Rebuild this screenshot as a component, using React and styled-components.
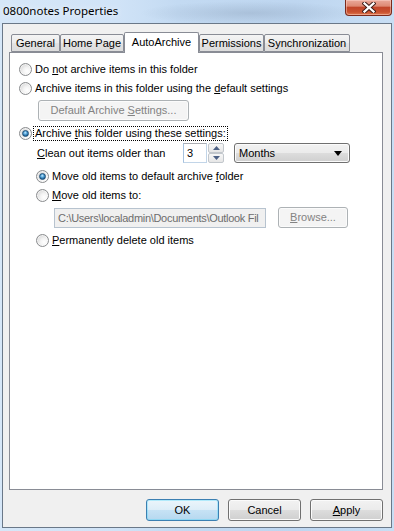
import React from 'react';
import styled, { createGlobalStyle } from 'styled-components';

const Global = createGlobalStyle`
  html, body { margin: 0; padding: 0; width: 394px; height: 531px; overflow: hidden; background: #c4dcf3; }
  #root { width: 394px; height: 531px; }
  * { box-sizing: border-box; }
`;

const Window = styled.div`
  width: 394px;
  height: 531px;
  display: flex;
  flex-direction: column;
  padding: 0 2px 3px 2px;
  background:
    radial-gradient(ellipse 110px 12px at 250px 13px, rgba(120,140,165,0.3), rgba(120,140,165,0) 100%),
    linear-gradient(90deg, #d6e7f8 0%, #d0e3f7 30%, #c3daf2 45%, #bed6f0 75%, #c8def4 100%);
  font-family: "Liberation Sans", Arial, sans-serif;
  font-size: 11px;
  color: #000;
`;

const TitleBar = styled.div`
  height: 23px;
  display: flex;
  justify-content: space-between;
  align-items: flex-start;
`;

const TitleText = styled.div`
  font-family: "Noto Sans", "Liberation Sans", sans-serif;
  font-size: 11.5px;
  line-height: 16px;
  padding: 3px 0 0 1px;
  color: #000;
  text-shadow: 0 0 6px rgba(255,255,255,0.9);
`;

const CloseBtn = styled.div`
  width: 47px;
  height: 16px;
  border: 1px solid #7b2a1c;
  border-top: none;
  border-radius: 0 0 4px 4px;
  background: linear-gradient(#eaa99a 0%, #de8a74 40%, #c2462a 50%, #c9512f 80%, #e07a50 100%);
  box-shadow: inset 0 0 0 1px rgba(255,220,210,0.45);
  display: flex;
  align-items: center;
  justify-content: center;
`;

const Client = styled.div`
  flex: 1;
  display: flex;
  flex-direction: column;
  border: 1px solid #6a7888;
  background: #f0f0f0;
  padding: 8px 8px 6px 6px;
`;

const TabStrip = styled.div`
  height: 20px;
  display: flex;
  align-items: flex-end;
  padding-left: 2px;
`;

const Tab = styled.div`
  width: ${p => p.$w}px;
  height: ${p => (p.$active ? 21 : 18)}px;
  margin-bottom: ${p => (p.$active ? -1 : 0)}px;
  position: relative;
  z-index: ${p => (p.$active ? 2 : 1)};
  border: 1px solid #898c95;
  border-bottom: ${p => (p.$active ? 'none' : '1px solid #898c95')};
  border-radius: 2px 2px 0 0;
  background: ${p => (p.$active ? '#ffffff' : 'linear-gradient(#f4f4f4 0%, #ececec 50%, #e3e3e3 51%, #dcdcdc 100%)')};
  display: flex;
  justify-content: center;
  align-items: ${p => (p.$active ? 'flex-start' : 'center')};
  padding-top: ${p => (p.$active ? 3 : 0)}px;
  line-height: 13px;
  white-space: nowrap;
`;

const Panel = styled.div`
  flex: 1;
  border: 1px solid #898c95;
  background: #fff;
  padding: 9px 0 0 9px;
  display: flex;
  flex-direction: column;
`;

const Row = styled.div`
  display: flex;
  align-items: center;
  height: ${p => p.$h || 15}px;
  margin-top: ${p => p.$mt || 0}px;
  margin-left: ${p => p.$ml || 0}px;
  white-space: nowrap;
`;

const RadioOuter = styled.span`
  width: 13px;
  height: 13px;
  flex: none;
  border-radius: 50%;
  border: 1px solid #8a8c8e;
  background: radial-gradient(circle at 65% 65%, #ffffff 0%, #f4f4f4 35%, #d6d6d6 80%, #cacaca 100%);
  box-shadow: inset 0 0 0 1px rgba(255,255,255,0.6);
  display: flex;
  align-items: center;
  justify-content: center;
  margin-right: 3px;
`;

const RadioDot = styled.span`
  width: 7px;
  height: 7px;
  border-radius: 50%;
  background: radial-gradient(circle at 45% 35%, #c9ecff 0%, #5aa8dc 35%, #1b5f94 75%, #0d3f6c 100%);
  border: 1px solid #1f4e75;
`;

const Label = styled.span`
  line-height: 13px;
  color: ${p => (p.$disabled ? '#8b8b8b' : '#000')};
  padding: 0 1px;
  border: 1px ${p => (p.$focus ? 'dotted #000' : 'solid transparent')};
  margin-left: -2px;
`;

const U = styled.span`
  text-decoration: underline;
  text-underline-offset: 1px;
`;

const PushButton = styled.div`
  width: ${p => p.$w}px;
  height: ${p => p.$h || 22}px;
  margin-left: ${p => p.$ml || 0}px;
  border-radius: 3px;
  border: 1px solid ${p => (p.$default ? '#3c7fb1' : p.$disabled ? '#adb2b5' : '#707070')};
  background: ${p =>
    p.$disabled
      ? '#f4f4f4'
      : p.$default
      ? 'linear-gradient(#ebf5fb 0%, #dcedf8 50%, #c6e2f5 51%, #b6d8ef 100%)'
      : 'linear-gradient(#f2f2f2 0%, #ebebeb 50%, #dddddd 51%, #cfcfcf 100%)'};
  box-shadow: inset 0 0 0 1px ${p => (p.$default ? 'rgba(72,216,251,0.35)' : '#fbfbfb')};
  color: ${p => (p.$disabled ? '#838383' : '#000')};
  display: flex;
  align-items: center;
  justify-content: center;
  line-height: 13px;
  white-space: nowrap;
`;

const CleanLabel = styled.span`
  width: 146px;
  line-height: 13px;
`;

const SpinInput = styled.div`
  width: 24px;
  height: 20px;
  border: 1px solid #abadb3;
  border-color: #abadb3 #c2d5e8 #c2d5e8 #a6c2df;
  background: #fff;
  padding-left: 3px;
  display: flex;
  align-items: center;
`;

const SpinButtons = styled.div`
  width: 16px;
  height: 20px;
  margin-left: 1px;
  display: flex;
  flex-direction: column;
`;

const SpinButton = styled.div`
  height: 10px;
  border: 1px solid #c2c7cc;
  border-radius: 2px;
  background: linear-gradient(#f7f7f7, #e6e6e6);
  display: flex;
  align-items: center;
  justify-content: center;
`;

const Select = styled.div`
  width: 116px;
  height: 20px;
  margin-left: 10px;
  border: 1px solid #707070;
  border-radius: 3px;
  background: linear-gradient(#f2f2f2 0%, #ebebeb 50%, #dddddd 51%, #cfcfcf 100%);
  box-shadow: inset 0 0 0 1px #fbfbfb;
  display: flex;
  align-items: center;
  justify-content: space-between;
  padding: 0 7px 0 4px;
`;

const TextBox = styled.div`
  width: 212px;
  height: 20px;
  border: 1px solid #b7c3cf;
  background: #f0f0f0;
  color: #6d6d6d;
  padding-left: 3px;
  letter-spacing: -0.3px;
  display: flex;
  align-items: center;
  overflow: hidden;
  white-space: nowrap;
`;

const ButtonRow = styled.div`
  margin-top: 9px;
  display: flex;
  justify-content: flex-end;
  gap: 9px;
`;

const Radio = ({ checked }) => (
  <RadioOuter>{checked && <RadioDot />}</RadioOuter>
);

const Tri = ({ dir }) => (
  <svg width="7" height="4" viewBox="0 0 7 4">
    {dir === 'up' ? <path d="M0 4 L3.5 0 L7 4 Z" fill="#4d6185" /> : <path d="M0 0 L7 0 L3.5 4 Z" fill="#4d6185" />}
  </svg>
);

export default function App() {
  return (
    <>
      <Global />
      <Window>
        <TitleBar>
          <TitleText>0800notes Properties</TitleText>
          <CloseBtn>
            <svg width="14" height="11" viewBox="0 0 14 11">
              <path d="M2.5 1.5 L11.5 9.5 M11.5 1.5 L2.5 9.5" stroke="#3a1c18" strokeWidth="4.2" strokeLinecap="square" fill="none" />
              <path d="M2.5 1.5 L11.5 9.5 M11.5 1.5 L2.5 9.5" stroke="#ffffff" strokeWidth="2.3" strokeLinecap="square" fill="none" />
            </svg>
          </CloseBtn>
        </TitleBar>
        <Client>
          <TabStrip>
            <Tab $w={49}>General</Tab>
            <Tab $w={64}>Home Page</Tab>
            <Tab $w={75} $active>AutoArchive</Tab>
            <Tab $w={65}>Permissions</Tab>
            <Tab $w={86}>Synchronization</Tab>
          </TabStrip>
          <Panel>
            <Row>
              <Radio />
              <Label>Do <U>n</U>ot archive items in this folder</Label>
            </Row>
            <Row $mt={4}>
              <Radio />
              <Label>Archive items in this folder using the <U>d</U>efault settings</Label>
            </Row>
            <Row $mt={4} $h={21} $ml={19}>
              <PushButton $w={151} $h={21} $disabled><span>Default Archive <U>S</U>ettings...</span></PushButton>
            </Row>
            <Row $mt={5}>
              <Radio checked />
              <Label $focus>Archive <U>t</U>his folder using these settings:</Label>
            </Row>
            <Row $mt={2} $h={20} $ml={18}>
              <CleanLabel><U>C</U>lean out items older than</CleanLabel>
              <SpinInput>3</SpinInput>
              <SpinButtons>
                <SpinButton><Tri dir="up" /></SpinButton>
                <SpinButton><Tri dir="down" /></SpinButton>
              </SpinButtons>
              <Select>
                <span>Months</span>
                <svg width="8" height="5" viewBox="0 0 8 5"><path d="M0 0 L8 0 L4 5 Z" fill="#000" /></svg>
              </Select>
            </Row>
            <Row $mt={6} $ml={17}>
              <Radio checked />
              <Label>Move old items to default archive <U>f</U>older</Label>
            </Row>
            <Row $mt={4} $ml={17}>
              <Radio />
              <Label><U>M</U>ove old items to:</Label>
            </Row>
            <Row $mt={4} $h={21} $ml={35}>
              <TextBox>C:\Users\localadmin\Documents\Outlook Fil</TextBox>
              <PushButton $w={70} $h={21} $ml={12} $disabled><span><U>B</U>rowse...</span></PushButton>
            </Row>
            <Row $mt={5} $ml={17}>
              <Radio />
              <Label><U>P</U>ermanently delete old items</Label>
            </Row>
          </Panel>
          <ButtonRow>
            <PushButton $w={73} $default>OK</PushButton>
            <PushButton $w={73}>Cancel</PushButton>
            <PushButton $w={73}><span><U>A</U>pply</span></PushButton>
          </ButtonRow>
        </Client>
      </Window>
    </>
  );
}
